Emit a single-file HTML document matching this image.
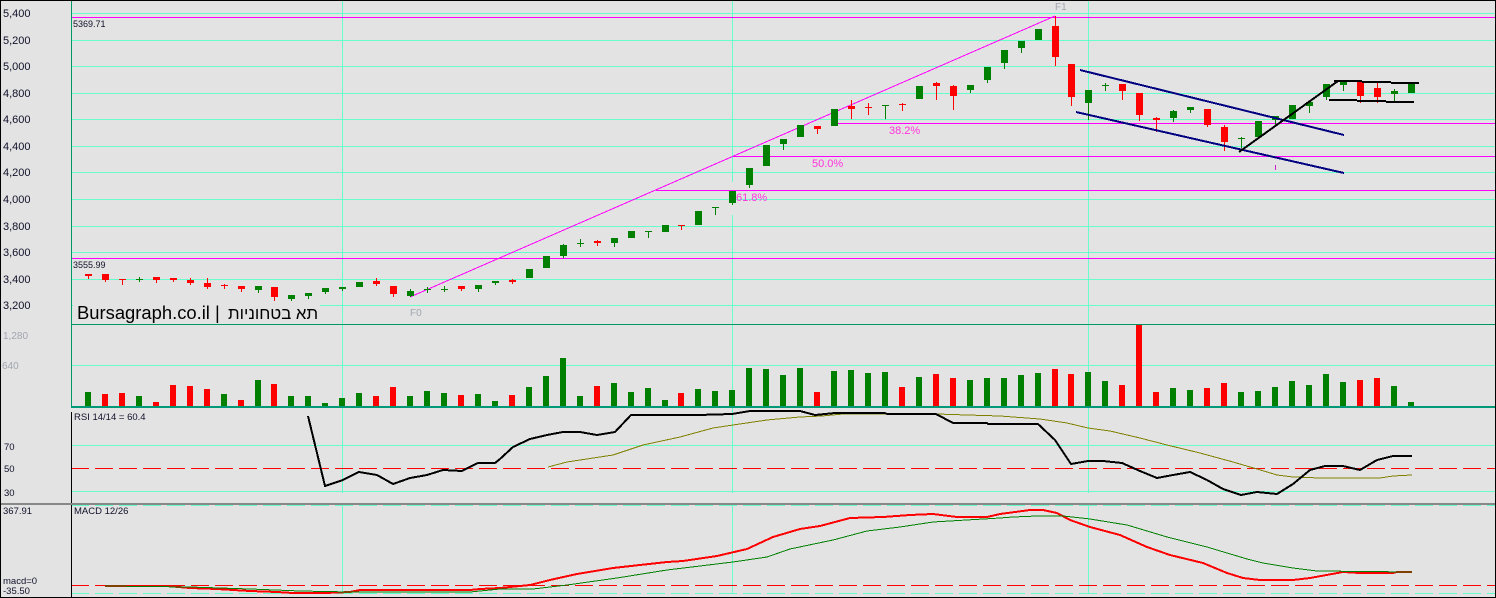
<!DOCTYPE html>
<html lang="en"><head><meta charset="utf-8"><title>Bursagraph</title>
<style>
html,body{margin:0;padding:0;background:#e3e3e3;width:1496px;height:598px;overflow:hidden}
svg{display:block}
text{font-family:"Liberation Sans",Arial,sans-serif}
.a{font-size:11px;fill:#10102a}
.s{font-size:9.5px;fill:#10102a}
.g{font-size:10px;fill:#a0a6b0}
.f{font-size:11px;fill:#ff33dd}
</style></head><body>
<svg width="1496" height="598" viewBox="0 0 1496 598" xmlns="http://www.w3.org/2000/svg">
<rect width="1496" height="598" fill="#e3e3e3"/>
<g shape-rendering="crispEdges" fill="none">
<!-- grid -->
<path stroke="#66ffcc" d="M71 13.5H1495M71 40.5H1495M71 66.5H1495M71 93.5H1495M71 119.5H1495M71 146.5H1495M71 172.5H1495M71 199.5H1495M71 226.5H1495M71 252.5H1495M71 279.5H1495M71 305.5H1495M71 365.5H1495M71 445.5H1495M71 491.5H1495"/>
<path stroke="#66ffcc" d="M342.5 1V493M342.5 505V593M732.5 1V182M732.5 215V493M732.5 505V593M1088.5 1V493M1088.5 505V593"/>
<path stroke="#66ffcc" stroke-dasharray="18 6" d="M71 505.5H1495M71 593.5H1495"/>
<rect x="73" y="305" width="247" height="18" fill="#e3e3e3"/>
<!-- fib lines -->
<path stroke="#ff00ff" d="M71 17.5H1495M71 258.5H1495M834 123.5H1495M733 156.5H1495M656 190.5H1495"/>
<path stroke="#ff00ff" d="M410 297L1055 16"/>
<path stroke="#cc22cc" d="M1275.5 165V170"/>
<!-- volume -->
<path stroke="#008000" stroke-width="6" d="M88 406V392M139 406V396M224 406V394M258 406V380M291 406V396M308 406V396M325 406V403M342 406V398M359 406V393M410 406V396M427 406V391M444 406V393M478 406V394M495 406V401M529 406V387M546 406V376M563 406V358M580 406V396M614 406V383M631 406V392M648 406V388M665 406V400M698 406V389M715 406V391M732 406V390M749 406V368M766 406V369M783 406V375M800 406V368M834 406V371M851 406V370M868 406V373M885 406V372M919 406V377M970 406V380M987 406V378M1004 406V378M1021 406V375M1038 406V373M1088 406V372M1105 406V381M1173 406V388M1190 406V390M1241 406V392M1258 406V391M1275 406V387M1292 406V381M1309 406V385M1326 406V374M1343 406V382M1394 406V386M1411 406V402"/>
<path stroke="#ff0000" stroke-width="6" d="M105 406V394M122 406V393M156 406V402M173 406V385M190 406V386M207 406V389M241 406V400M274 406V384M376 406V396M393 406V387M461 406V395M512 406V395M597 406V386M681 406V393M817 406V392M902 406V387M936 406V374M953 406V378M1055 406V369M1071 406V374M1122 406V385M1139 406V325M1156 406V392M1207 406V388M1224 406V383M1360 406V380M1377 406V378"/>
<!-- candle wicks -->
<path stroke="#ff0000" d="M88.5 274V279M105.5 274V282M122.5 279V285M119 279.5H126M156.5 277V283M173.5 278V282M190.5 278V285M207.5 278V289M224.5 284V289M221 285.5H228M241.5 286V292M274.5 287V301M376.5 278V286M393.5 286V297M461.5 286V291M512.5 279V284M597.5 240V246M681.5 225V230M678 225.5H685M817.5 126V134M851.5 100V119M868.5 103V115M865 107.5H872M902.5 103V111M899 104.5H906M936.5 82V100M953.5 85V110M1055.5 16V66M1071.5 64V106M1122.5 84V100M1139.5 93V121M1156.5 117V132M1207.5 109V127M1224.5 125V151M1360.5 82V103M1377.5 83V103"/>
<path stroke="#008000" d="M139.5 277V282M136 279.5H143M258.5 286V293M291.5 295V301M308.5 293V299M325.5 288V294M342.5 287V291M410.5 289V297M427.5 287V293M424 289.5H431M444.5 286V292M441 289.5H448M478.5 285V292M495.5 281V285M563.5 244V258M580.5 239V247M577 243.5H584M614.5 238V247M648.5 231V238M645 231.5H652M715.5 207V215M712 207.5H719M732.5 191V205M749.5 168V188M783.5 139V150M885.5 105V119M882 105.5H889M970.5 85V93M987.5 67V83M1004.5 50V69M1021.5 41V53M1088.5 90V120M1105.5 83V91M1102 85.5H1109M1173.5 110V122M1190.5 107V113M1241.5 137V148M1238 138.5H1245M1275.5 116V125M1309.5 102V113M1326.5 84V100M1343.5 81V91M1394.5 89V101M1411.5 84V93"/>
<!-- candle bodies -->
<path stroke="#ff0000" stroke-width="7" d="M88.5 274V276M105.5 274V280M156.5 277V280M173.5 278V280M190.5 280V283M207.5 283V287M241.5 286V289M274.5 287V297M376.5 281V284M393.5 286V294M461.5 286V289M512.5 280V282M597.5 241V243M817.5 126V129M851.5 106V109M936.5 83V86M953.5 86V96M1055.5 26V57M1071.5 64V97M1122.5 84V91M1139.5 93V115M1156.5 118V120M1207.5 109V125M1224.5 127V142M1360.5 82V96M1377.5 88V97"/>
<path stroke="#008000" stroke-width="7" d="M258.5 286V290M291.5 295V299M308.5 293V296M325.5 288V292M342.5 287V289M359.5 282V287M410.5 291V296M478.5 285V289M495.5 281V283M529.5 269V278M546.5 256V268M563.5 245V256M614.5 238V243M631.5 231V238M665.5 225V232M698.5 211V225M732.5 191V203M749.5 168V185M766.5 145V166M783.5 139V144M800.5 125V137M834.5 109V126M919.5 86V99M970.5 85V90M987.5 67V80M1004.5 50V63M1021.5 41V48M1038.5 29V40M1088.5 90V103M1173.5 111V118M1190.5 107V110M1258.5 121V137M1275.5 116V120M1292.5 105V119M1309.5 102V106M1326.5 84V97M1343.5 81V85M1394.5 91V94M1411.5 84V93"/>
<!-- trend lines -->
<path stroke="#000080" stroke-width="2" d="M1080 70L1344 135M1076 112L1344 173"/>
<path stroke="#000" stroke-width="2" d="M1239 152L1338 81M1334 81H1362M1362 82H1391M1391 83H1419M1329 100H1357M1357 101H1386M1386 102H1414"/>
<!-- RSI -->
<path stroke="#ff0000" stroke-dasharray="18 6" d="M71 468.5H1495"/>
<polyline stroke="#808000" points="548,467 567,462 613,455 643,445 680,437 713,428 733,425 767,420 800,417 822,416 843,414 937,414 967,415 1000,416 1040,419 1067,423 1088,428 1110,431 1140,438 1167,445 1200,453 1233,462 1257,469 1277,475 1293,477 1320,478 1380,478 1393,476 1412,475"/>
<polyline stroke="#000" stroke-width="2" points="308,416 325,486 343,480 359,472 377,475 393,484 410,478 427,475 443,470 462,471 478,463 495,463 500,459 513,447 530,439 547,435 563,432 580,432 597,435 615,432 631,415 698,415 732,414 750,411 800,411 815,415 835,413 885,413 887,414 936,414 953,423 987,423 988,424 1038,424 1055,440 1071,464 1088,461 1103,461 1122,463 1140,471 1157,478 1173,475 1190,472 1207,480 1223,489 1241,495 1257,492 1277,494 1293,484 1310,470 1325,466 1343,466 1360,470 1377,460 1393,456 1412,456"/>
<!-- MACD -->
<path stroke="#ff0000" stroke-dasharray="18 6" d="M71 585.5H1495"/>
<polyline stroke="#ff0000" stroke-width="2" points="105,586 167,586 190,588 217,589 250,591 277,592 293,593 325,593 350,592 360,590 470,590 480,589 500,588 530,585 550,580 577,574 613,568 667,562 683,561 717,556 747,549 773,537 800,529 820,526 850,518 883,517 910,515 933,514 957,517 987,517 1000,514 1030,510 1043,510 1057,513 1070,520 1090,527 1120,535 1147,547 1170,555 1203,563 1227,573 1243,578 1260,580 1293,580 1310,578 1343,572 1360,573 1393,573 1397,572 1412,572"/>
<polyline stroke="#008000" points="105,586 190,587 250,589 300,591 350,592 470,592 500,589 533,589 567,585 617,578 667,570 733,562 767,557 790,549 833,540 867,531 900,527 933,522 1000,518 1013,517 1037,516 1063,516 1090,519 1127,525 1167,537 1207,547 1247,559 1263,563 1293,568 1317,571 1412,572"/>
<!-- frame -->
<path stroke="#009966" d="M71.5 1V408M71 324.5H1495"/>
<path stroke="#009977" stroke-width="2" d="M71 407H1495"/>
<path stroke="#000" d="M71.5 412V503M71.5 505V597"/>
<path stroke="#888" stroke-width="2" d="M0 504H1495"/>
<path stroke="#000" d="M0 .5H1496M.5 0V598M1495.5 0V598M0 597.5H1496"/>
</g>
<!-- axis labels -->
<text class="a" x="3" y="17">5,400</text>
<text class="a" x="3" y="44">5,200</text>
<text class="a" x="3" y="70">5,000</text>
<text class="a" x="3" y="97">4,800</text>
<text class="a" x="3" y="123">4,600</text>
<text class="a" x="3" y="150">4,400</text>
<text class="a" x="3" y="176">4,200</text>
<text class="a" x="3" y="203">4,000</text>
<text class="a" x="3" y="230">3,800</text>
<text class="a" x="3" y="256">3,600</text>
<text class="a" x="3" y="283">3,400</text>
<text class="a" x="3" y="309">3,200</text>
<text class="s" x="73" y="27" style="font-size:9px">5369.71</text>
<text class="s" x="73" y="268" style="font-size:9px">3555.99</text>
<text x="77" y="319" font-size="18.4px" fill="#000">Bursagraph.co.il |</text>
<text x="228" y="319" font-size="16.8px" fill="#000">תא בטחוניות</text>
<text class="g" x="410" y="316">F0</text>
<text class="g" x="1055" y="10">F1</text>
<text class="f" x="889" y="134">38.2%</text>
<text class="f" x="812" y="167">50.0%</text>
<text class="f" x="736" y="201">61.8%</text>
<text class="g" x="3" y="339" font-size="9.5px">1,280</text>
<text class="g" x="2" y="369" font-size="9.5px">640</text>
<text class="s" x="74" y="420">RSI 14/14 = 60.4</text>
<text class="s" x="4" y="450">70</text>
<text class="s" x="4" y="472">50</text>
<text class="s" x="4" y="496">30</text>
<text class="s" x="3" y="514">367.91</text>
<text class="s" x="74" y="514">MACD 12/26</text>
<text class="s" x="3" y="584">macd=0</text>
<text class="s" x="3" y="594">-35.50</text>
</svg>
</body></html>
